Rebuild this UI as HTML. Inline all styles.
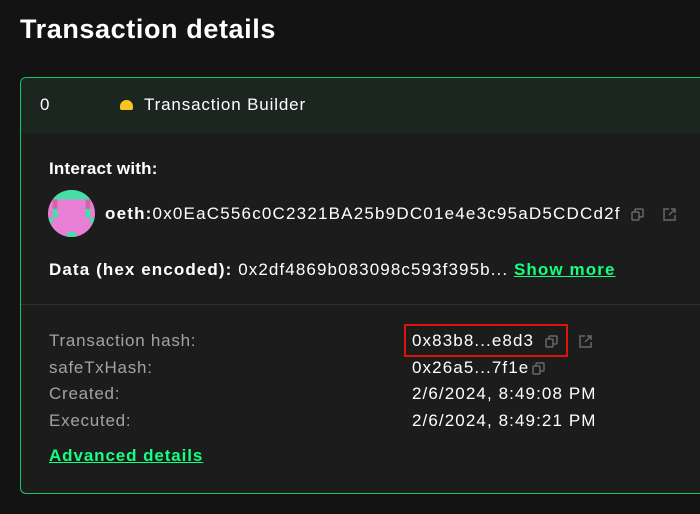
<!DOCTYPE html>
<html><head><style>
*{margin:0;padding:0;box-sizing:border-box}
body{width:700px;height:514px;background:#121312;font-family:"Liberation Sans",sans-serif;color:#fff;position:relative;overflow:hidden}
h1{position:absolute;left:20px;top:14px;font-size:27px;font-weight:bold;letter-spacing:0.6px}
.card{position:absolute;left:20px;top:77px;width:700px;height:417px;border:1px solid #12c86a;border-right:none;border-radius:6px 0 0 6px;background:#1c1c1c;overflow:hidden}
.hdr{height:55px;background:#1b2621;position:relative;font-size:17px}
.t{position:absolute;white-space:nowrap}
.g{color:#a1a3a7}
.ico{position:absolute;width:13px;height:13px}
a{color:#12ff80;font-weight:bold;text-decoration:underline}
</style></head><body>
<h1>Transaction details</h1>
<div class="card">
 <div class="hdr">
  <span class="t" style="left:19px;top:17px">0</span>
  <span class="t" style="left:99px;top:22px;width:13px;height:10px;background:#f6c522;border-radius:7px 7px 2px 2px"></span>
  <span class="t" style="left:123px;top:17px;letter-spacing:0.85px">Transaction Builder</span>
 </div>
 <span class="t" style="left:28px;top:81px;font-size:17px;font-weight:bold;letter-spacing:0.2px">Interact with:</span>
 <svg class="t" style="left:27px;top:112px" width="47" height="47" viewBox="0 0 10 10"><defs><clipPath id="c"><circle cx="5" cy="5" r="5"/></clipPath></defs><g clip-path="url(#c)"><rect width="10" height="10" fill="#e87fd4"/><rect x="1" y="0" width="8" height="2" fill="#42e0a5"/><rect x="1" y="4" width="1" height="2" fill="#42e0a5"/><rect x="8" y="4" width="1" height="2" fill="#42e0a5"/><rect x="0" y="6" width="1" height="1" fill="#42e0a5"/><rect x="9" y="6" width="1" height="1" fill="#42e0a5"/><rect x="4" y="9" width="2" height="1" fill="#42e0a5"/><rect x="1" y="2" width="1" height="2" fill="#c66aa8"/><rect x="8" y="2" width="1" height="2" fill="#c66aa8"/></g></svg>
 <span class="t" style="left:84px;top:126px;font-size:17px;letter-spacing:1.2px"><b>oeth:</b>0x0EaC556c0C2321BA25b9DC01e4e3c95aD5CDCd2f</span>
 <svg class="ico" style="left:610px;top:130px" viewBox="0 0 13 13" fill="none" stroke="#666" stroke-width="1.5"><rect x="1" y="4" width="7" height="8" rx="1"/><path d="M4 4V2a1 1 0 011-1h6a1 1 0 011 1v6a1 1 0 01-1 1H8"/></svg>
 <svg class="ico" style="left:642px;top:130px" viewBox="0 0 13 13" fill="none" stroke="#666" stroke-width="1.5"><path d="M6 1H1v11h11V7M8 1h4v4M12 1L6 7"/></svg>
 <span class="t" style="left:28px;top:182px;font-size:17px;letter-spacing:1.1px"><b>Data (hex encoded):</b> 0x2df4869b083098c593f395b... <a>Show more</a></span>
 <div style="position:absolute;left:0;top:226px;width:700px;height:1px;background:#303030"></div>
 <span class="t g" style="left:28px;top:250px;font-size:17px;line-height:26.7px;letter-spacing:0.75px">Transaction hash:<br>safeTxHash:<br>Created:<br>Executed:</span>
 <div style="position:absolute;left:383px;top:246px;width:164px;height:33px;border:2px solid #e0120c"></div>
 <span class="t" style="left:391px;top:250px;font-size:17px;line-height:26.7px;letter-spacing:1.1px">0x83b8...e8d3<br>0x26a5...7f1e<br>2/6/2024, 8:49:08 PM<br>2/6/2024, 8:49:21 PM</span>
 <svg class="ico" style="left:524px;top:257px" viewBox="0 0 13 13" fill="none" stroke="#666" stroke-width="1.5"><rect x="1" y="4" width="7" height="8" rx="1"/><path d="M4 4V2a1 1 0 011-1h6a1 1 0 011 1v6a1 1 0 01-1 1H8"/></svg>
 <svg class="ico" style="left:558px;top:257px" viewBox="0 0 13 13" fill="none" stroke="#666" stroke-width="1.5"><path d="M6 1H1v11h11V7M8 1h4v4M12 1L6 7"/></svg>
 <svg class="ico" style="left:511px;top:284px" viewBox="0 0 13 13" fill="none" stroke="#666" stroke-width="1.5"><rect x="1" y="4" width="7" height="8" rx="1"/><path d="M4 4V2a1 1 0 011-1h6a1 1 0 011 1v6a1 1 0 01-1 1H8"/></svg>
 <span class="t" style="left:28px;top:368px;font-size:17px;letter-spacing:0.9px"><a>Advanced details</a></span>
</div>
</body></html>
